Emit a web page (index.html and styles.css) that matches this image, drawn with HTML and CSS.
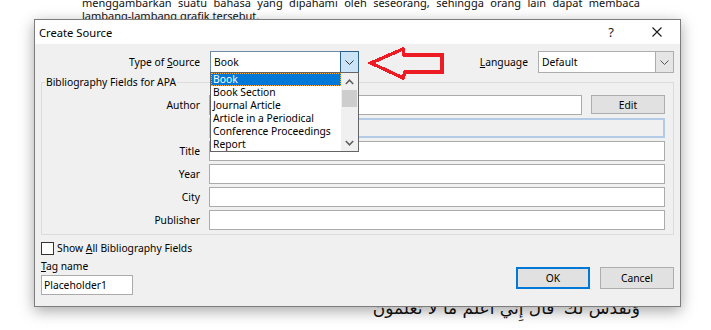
FILE: index.html
```html
<!DOCTYPE html>
<html>
<head>
<meta charset="utf-8">
<link rel="stylesheet" href="styles.css">
</head>
<body>
<div class="doc">
  <p class="line just">menggambarkan suatu bahasa yang dipahami oleh seseorang, sehingga orang lain dapat membaca</p>
  <p class="line">lambang-lambang grafik tersebut.</p>
  <p class="arabic" dir="rtl">وَنُقَدِّسُ لَكَ ۖ قَالَ إِنِّي أَعْلَمُ مَا لَا تَعْلَمُونَ</p>
</div>

<div class="dialog">
  <div class="titlebar">
    <span class="title">Create Source</span>
    <span class="tb-btn">?</span>
    <span class="tb-btn"><svg width="10" height="10" viewBox="0 0 10 10"><path d="M0.5 0.5 L9.5 9.5 M9.5 0.5 L0.5 9.5" stroke="#1a1a1a" stroke-width="1.1" fill="none"/></svg></span>
  </div>
  <div class="body">
    <div class="row1">
      <label class="lbl-type">Type of <u>S</u>ource</label>
      <div class="combo combo-type">
        <span class="val">Book</span>
        <span class="drop drop-active"><svg width="9" height="5" viewBox="0 0 9 5"><polyline points="0.5,0.5 4.5,4.5 8.5,0.5" stroke="#333" stroke-width="1" fill="none"/></svg></span>
        <div class="listbox">
          <ul class="items">
            <li class="sel">Book</li>
            <li>Book Section</li>
            <li>Journal Article</li>
            <li>Article in a Periodical</li>
            <li>Conference Proceedings</li>
            <li>Report</li>
          </ul>
          <div class="scroll">
            <span class="sarrow"><svg width="9" height="6" viewBox="0 0 9 6"><polyline points="0.8,5 4.5,1.2 8.2,5" stroke="#606060" stroke-width="1.6" fill="none"/></svg></span>
            <span class="thumb"></span>
            <span class="sfill"></span>
            <span class="sarrow"><svg width="9" height="6" viewBox="0 0 9 6"><polyline points="0.8,1 4.5,4.8 8.2,1" stroke="#606060" stroke-width="1.6" fill="none"/></svg></span>
          </div>
        </div>
      </div>
      <span class="spacer"></span>
      <label class="lbl-lang"><u>L</u>anguage</label>
      <div class="combo combo-lang">
        <span class="val">Default</span>
        <span class="drop"><svg width="9" height="5" viewBox="0 0 9 5"><polyline points="0.5,0.5 4.5,4.5 8.5,0.5" stroke="#555" stroke-width="1" fill="none"/></svg></span>
      </div>
    </div>

    <fieldset class="group">
      <legend>Bibliography Fields for APA</legend>
      <div class="fields">
        <label>Author</label>
        <div class="authrow"><div class="input"></div><button class="btn edit">Edit</button></div>
        <span></span>
        <div class="input focus"><span class="caret"></span></div>
        <label>Title</label>
        <div class="input"></div>
        <label>Year</label>
        <div class="input"></div>
        <label>City</label>
        <div class="input"></div>
        <label>Publisher</label>
        <div class="input"></div>
      </div>
    </fieldset>

    <div class="check"><span class="box"></span><span>Show <u>A</u>ll Bibliography Fields</span></div>

    <div class="bottom">
      <div class="tag">
        <div class="taglbl"><u>T</u>ag name</div>
        <div class="input tagin">Placeholder1</div>
      </div>
      <div class="buttons">
        <button class="btn ok">OK</button>
        <button class="btn">Cancel</button>
      </div>
    </div>
  </div>
</div>

<svg class="redarrow" width="80" height="38" viewBox="0 0 80 38" shape-rendering="crispEdges">
  <polygon points="3,17 35,3 36,9 74,9 74,26 37,26 35,32" fill="none" stroke="#ed1c24" stroke-width="3.4" stroke-linejoin="miter"/>
</svg>
</body>
</html>
```

FILE: styles.css
```css
html, body {
  margin: 0;
  padding: 0;
}
body {
  position: relative;
  width: 711px;
  height: 330px;
  overflow: hidden;
  background: #ffffff;
  font-family: "Noto Sans", "Open Sans", sans-serif;
  color: #000;
}

/* background document */
.doc {
  margin-left: 82px;
  width: 558px;
}
.line {
  margin: 0;
  font-size: 11px;
  line-height: 13px;
  color: #111;
}
.line:first-child {
  margin-top: -4px;
}
.just {
  text-align: justify;
  text-align-last: justify;
}
.arabic {
  margin: 274px 0 0 0;
  font-family: "DejaVu Sans", sans-serif;
  font-size: 17px;
  line-height: 24px;
  color: #111;
  text-align: right;
}

/* dialog window */
.dialog {
  position: absolute;
  left: 34px;
  top: 19px;
  width: 647px;
  height: 288px;
  box-sizing: border-box;
  border: 1px solid #7d7d7d;
  background: #f0f0f0;
  box-shadow: 0 4px 14px rgba(0, 0, 0, 0.35);
  font-size: 10.3px;
  display: flex;
  flex-direction: column;
}
.titlebar {
  height: 24px;
  background: #ffffff;
  display: flex;
  align-items: center;
}
.title {
  flex: 1;
  padding-left: 4px;
  font-size: 11.2px;
  color: #000;
}
.tb-btn {
  width: 46px;
  height: 24px;
  display: flex;
  align-items: center;
  justify-content: center;
  font-size: 13px;
  color: #1a1a1a;
}
.tb-btn:nth-child(2) {
  padding-left: 2px;
}

.body {
  flex: 1;
  padding: 7px 6px 0 6px;
  display: flex;
  flex-direction: column;
}

u {
  text-decoration: underline;
  text-underline-offset: 1px;
}

/* first row */
.row1 {
  display: flex;
  align-items: center;
  height: 22px;
}
.lbl-type {
  width: 159px;
  text-align: right;
  margin-right: 10px;
}
.spacer {
  flex: 1;
}
.lbl-lang {
  margin-right: 10px;
}
.combo {
  position: relative;
  height: 22px;
  box-sizing: border-box;
  background: #ffffff;
  display: flex;
  align-items: stretch;
}
.combo .val {
  flex: 1;
  display: flex;
  align-items: center;
  padding-left: 3px;
}
.combo-type {
  width: 149px;
  border: 1px solid #6f8aa3;
}
.combo-lang {
  width: 136px;
  border: 1px solid #adadad;
}
.drop {
  width: 17px;
  display: flex;
  align-items: center;
  justify-content: center;
  background: #e5e5e5;
  border-left: 1px solid #adadad;
}
.drop-active {
  margin: -1px -1px -1px 0;
  background: #cce4f7;
  border: 1px solid #2c628b;
}

/* open dropdown list */
.listbox {
  position: absolute;
  left: -1px;
  top: 20px;
  width: 149px;
  height: 80px;
  box-sizing: border-box;
  background: #ffffff;
  border: 1px solid #646464;
  display: flex;
  z-index: 5;
}
.items {
  list-style: none;
  margin: 0;
  padding: 0;
  flex: 1;
}
.items li {
  height: 13px;
  line-height: 13px;
  padding-left: 2px;
  white-space: nowrap;
  box-sizing: border-box;
}
.items li.sel {
  background: #0078d7;
  color: #ffffff;
  outline: 1px dotted #f5b042;
  outline-offset: -1px;
}
.scroll {
  width: 17px;
  background: #f0f0f0;
  display: flex;
  flex-direction: column;
}
.sarrow {
  height: 17px;
  display: flex;
  align-items: center;
  justify-content: center;
}
.thumb {
  height: 17px;
  margin: 0 1px;
  background: #cdcdcd;
}
.sfill {
  flex: 1;
}

/* group box */
.group {
  margin: 2px 0 0 0;
  padding: 6px 8px 4px 0;
  border: 1px solid #dcdcdc;
  min-width: 0;
}
.group legend {
  margin-left: 3px;
  padding: 0 1px;
  line-height: 14px;
}
.fields {
  display: grid;
  grid-template-columns: 158px 1fr;
  column-gap: 9px;
  row-gap: 3px;
  grid-auto-rows: 20px;
  align-items: center;
}
.fields label {
  text-align: right;
}
.input {
  height: 20px;
  box-sizing: border-box;
  background: #ffffff;
  border: 1px solid #ababab;
}
.input.focus {
  position: relative;
  background: #f0f0f0;
  border: 2px solid #b3cbe7;
}
.caret {
  position: absolute;
  left: -1px;
  top: 0;
  width: 2px;
  height: 13px;
  background: #222;
}
.authrow {
  display: flex;
  gap: 9px;
  align-items: flex-start;
  height: 20px;
}
.authrow .input {
  flex: 1;
}
.btn {
  font-family: inherit;
  font-size: inherit;
  color: #000;
  background: #e1e1e1;
  border: 1px solid #adadad;
  padding: 0;
  width: 74px;
  height: 22px;
  box-sizing: border-box;
}
.btn.edit {
  height: 19px;
}
.btn.ok {
  border: 2px solid #0078d7;
}

/* checkbox */
.check {
  margin-top: 6px;
  display: flex;
  align-items: center;
  gap: 3px;
  height: 14px;
}
.box {
  width: 13px;
  height: 13px;
  box-sizing: border-box;
  background: #ffffff;
  border: 1px solid #333333;
}

/* bottom row */
.bottom {
  margin-top: 4px;
  display: flex;
  align-items: flex-end;
  justify-content: space-between;
}
.taglbl {
  line-height: 14px;
  margin-bottom: 2px;
}
.tagin {
  width: 92px;
  line-height: 18px;
  padding-left: 2px;
}
.buttons {
  display: flex;
  gap: 10px;
  margin-bottom: 6px;
}

/* annotation arrow drawn over the screenshot */
.redarrow {
  position: absolute;
  left: 368px;
  top: 46px;
}
```
